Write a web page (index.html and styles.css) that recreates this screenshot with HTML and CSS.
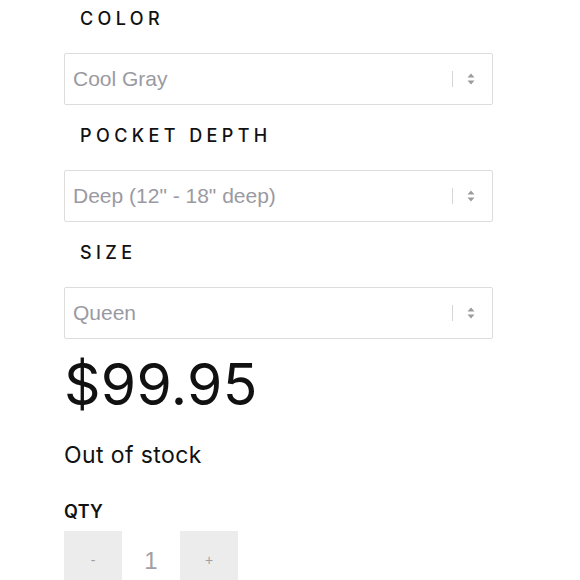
FILE: index.html
```html
<!DOCTYPE html>
<html>
<head>
<meta charset="utf-8">
<link rel="stylesheet" href="styles.css">
</head>
<body>
<div class="product">
  <div class="field">
    <div class="label">COLOR</div>
    <div class="select">
      <span class="value">Cool Gray</span>
      <span class="sep"></span>
      <svg class="arrows" width="8" height="12" viewBox="0 0 8 12"><path d="M4 0.5 L7.5 4.5 H0.5 Z M4 11.5 L7.5 7.5 H0.5 Z" fill="#9b9b9b"/></svg>
    </div>
  </div>
  <div class="field">
    <div class="label">POCKET DEPTH</div>
    <div class="select">
      <span class="value">Deep (12" - 18" deep)</span>
      <span class="sep"></span>
      <svg class="arrows" width="8" height="12" viewBox="0 0 8 12"><path d="M4 0.5 L7.5 4.5 H0.5 Z M4 11.5 L7.5 7.5 H0.5 Z" fill="#9b9b9b"/></svg>
    </div>
  </div>
  <div class="field">
    <div class="label">SIZE</div>
    <div class="select">
      <span class="value">Queen</span>
      <span class="sep"></span>
      <svg class="arrows" width="8" height="12" viewBox="0 0 8 12"><path d="M4 0.5 L7.5 4.5 H0.5 Z M4 11.5 L7.5 7.5 H0.5 Z" fill="#9b9b9b"/></svg>
    </div>
  </div>
  <div class="price">$99.95</div>
  <div class="stock">Out of stock</div>
  <div class="qty-label">QTY</div>
  <div class="qty">
    <div class="btn">-</div>
    <div class="count">1</div>
    <div class="btn">+</div>
  </div>
</div>
</body>
</html>
```
FILE: styles.css
```css
html, body {
  margin: 0;
  padding: 0;
  background: #ffffff;
}
body {
  width: 580px;
  height: 580px;
  overflow: hidden;
  font-family: Inter, "DejaVu Sans", sans-serif;
  color: #111;
}
.product {
  padding-left: 64px;
  width: 429px;
  display: flex;
  flex-direction: column;
}
.field {
  display: flex;
  flex-direction: column;
  margin-bottom: 12px;
}
.label {
  font-size: 18px;
  line-height: 20px;
  height: 20px;
  padding-top: 9px;
  padding-left: 16px;
  letter-spacing: 4.4px;
  font-weight: 500;
  color: #111;
  margin-bottom: 24px;
}
.select {
  height: 50px;
  border: 1px solid #dcdcdc;
  border-radius: 2px;
  display: flex;
  align-items: center;
  padding: 0 17px 0 8px;
}
.value {
  flex: 1;
  font-family: "Liberation Sans", Arial, sans-serif;
  font-size: 21px;
  color: #9a9aa2;
}
.sep {
  width: 1px;
  height: 16px;
  background: #d6d6d6;
  margin-right: 14px;
}
.arrows {
  display: block;
}
.price {
  font-size: 57px;
  line-height: 60px;
  margin-top: 4px;
  letter-spacing: 0.3px;
  font-weight: 400;
}
.stock {
  font-size: 23px;
  line-height: 26px;
  margin-top: 27px;
  letter-spacing: 0.4px;
}
.qty-label {
  font-size: 18px;
  line-height: 20px;
  font-weight: 600;
  margin-top: 34px;
  letter-spacing: 0.3px;
}
.qty {
  display: flex;
  align-items: stretch;
  margin-top: 9px;
  height: 60px;
}
.btn {
  width: 58px;
  background: #ececec;
  color: #a0a0a0;
  font-family: "Liberation Sans", Arial, sans-serif;
  font-size: 14px;
  display: flex;
  justify-content: center;
  padding-top: 21px;
  box-sizing: border-box;
}
.count {
  width: 58px;
  text-align: center;
  font-family: "Liberation Sans", Arial, sans-serif;
  font-size: 24px;
  color: #a0a0a6;
  padding-top: 16px;
  box-sizing: border-box;
}
```
